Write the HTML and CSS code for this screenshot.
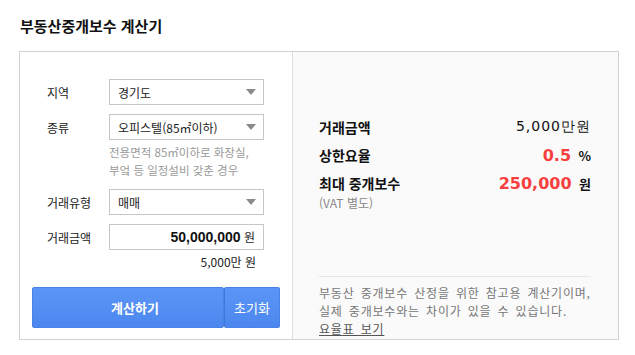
FILE: index.html
```html
<!DOCTYPE html>
<html lang="ko">
<head>
    <meta charset="UTF-8">
    <meta name="viewport" content="width=device-width, initial-scale=1.0">
    <title>부동산중개보수 계산기</title>
    <link rel="stylesheet" href="styles.css">
</head>
<body>
    <div class="page">
        <!-- Title -->
        <h2 class="title">부동산중개보수 계산기</h2>

        <div class="calc-box">
            <!-- Input form -->
            <div class="calc-form">
                <div class="field">
                    <span class="label">지역</span>
                    <div class="select">
                        <span>경기도</span>
                        <svg class="arrow" width="10" height="6" viewBox="0 0 10 6"><path d="M0 0H10L5 6Z" fill="#8a8a8a"/></svg>
                    </div>
                </div>
                <div class="field">
                    <span class="label">종류</span>
                    <div class="select">
                        <span>오피스텔(85㎡이하)</span>
                        <svg class="arrow" width="10" height="6" viewBox="0 0 10 6"><path d="M0 0H10L5 6Z" fill="#8a8a8a"/></svg>
                    </div>
                </div>
                <p class="hint">전용면적 85㎡이하로 화장실,<br>부엌 등 일정설비 갖춘 경우</p>
                <div class="field">
                    <span class="label">거래유형</span>
                    <div class="select">
                        <span>매매</span>
                        <svg class="arrow" width="10" height="6" viewBox="0 0 10 6"><path d="M0 0H10L5 6Z" fill="#8a8a8a"/></svg>
                    </div>
                </div>
                <div class="field field-amount">
                    <span class="label">거래금액</span>
                    <div class="amount-input">
                        <span class="amount-num">50,000,000</span> 원
                    </div>
                </div>
                <p class="amount-note">5,000만 원</p>

                <div class="btn-row">
                    <button class="btn btn-calc">계산하기</button>
                    <button class="btn btn-reset">초기화</button>
                </div>
            </div>

            <!-- Result -->
            <div class="calc-result">
                <div class="result-list">
                    <div class="result-row">
                        <span class="result-label">거래금액</span>
                        <span class="result-value">5,000만원</span>
                    </div>
                    <div class="result-row">
                        <span class="result-label">상한요율</span>
                        <span class="result-value"><em class="red">0.5</em> <b class="unit">%</b></span>
                    </div>
                    <div class="result-row">
                        <span class="result-label">최대 중개보수</span>
                        <span class="result-value"><em class="red">250,000</em> <b class="unit">원</b></span>
                    </div>
                    <p class="vat">(VAT 별도)</p>
                </div>

                <div class="notice">
                    <p>부동산 중개보수 산정을 위한 참고용 계산기이며,<br>실제 중개보수와는 차이가 있을 수 있습니다.</p>
                    <a href="#" class="rate-link">요율표 보기</a>
                </div>
            </div>
        </div>
    </div>
</body>
</html>
```

FILE: styles.css
```css
/* General */
body {
    margin: 0;
    font-family: 'Noto Sans CJK KR', 'Noto Sans', sans-serif;
    font-size: 12px;
    color: #333;
    background-color: #fff;
}

.page {
    padding: 16px 0 0 19px;
}

.title {
    margin: 0 0 15px 1px;
    font-size: 15px;
    font-weight: bold;
    line-height: 20px;
    color: #111;
}

/* Box */
.calc-box {
    display: flex;
    width: 600px;
    border: 1px solid #d2d2d2;
    box-sizing: border-box;
}

/* Left form */
.calc-form {
    width: 273px;
    padding: 27px 12px 11px;
    border-right: 1px solid #dedede;
    box-sizing: border-box;
}

.field {
    display: flex;
    align-items: center;
    padding: 0 16px 0 15px;
}

.field + .field {
    margin-top: 9px;
}

.label {
    width: 62px;
    font-size: 12px;
    color: #222;
}

.select {
    display: flex;
    align-items: center;
    justify-content: space-between;
    width: 155px;
    height: 26px;
    padding: 0 7px 0 8px;
    border: 1px solid #c6c6c6;
    box-sizing: border-box;
    font-size: 12px;
    color: #222;
}

.hint {
    margin: 3px 0 10px 77px;
    font-size: 11.5px;
    line-height: 18px;
    color: #999;
}

.amount-input {
    width: 155px;
    height: 26px;
    padding: 0 8px;
    border: 1px solid #c6c6c6;
    box-sizing: border-box;
    text-align: right;
    line-height: 24px;
    font-size: 12px;
    color: #222;
}

.amount-num {
    font-family: 'Liberation Sans', Arial, sans-serif;
    font-size: 14px;
    font-weight: bold;
    color: #111;
}

.amount-note {
    margin: 4px 0 0;
    padding-right: 24px;
    text-align: right;
    line-height: 16px;
    font-size: 12px;
    color: #222;
}

/* Buttons */
.btn-row {
    display: flex;
    margin-top: 17px;
}

.btn {
    height: 41px;
    border: 1px solid #4a83e6;
    border-radius: 2px;
    background: linear-gradient(#5b95f6, #4b87ef);
    color: #fff;
    font-family: 'Noto Sans CJK KR', sans-serif;
    font-size: 13px;
    cursor: pointer;
}

.btn-calc {
    width: 192px;
    padding-left: 20px;
    font-weight: bold;
}

.btn-reset {
    width: 56px;
    border-left-color: #3f78da;
}

/* Right result */
.calc-result {
    flex: 1;
    display: flex;
    flex-direction: column;
    padding: 61px 27px 1px 26px;
    background-color: #fafafa;
}

.result-row {
    display: flex;
    justify-content: space-between;
    align-items: center;
    height: 28px;
}

.result-label {
    font-size: 14px;
    font-weight: bold;
    color: #111;
}

.result-value {
    font-family: 'DejaVu Sans', sans-serif;
    font-size: 14px;
    letter-spacing: 1px;
    color: #111;
}

.result-value .red {
    font-style: normal;
    font-weight: bold;
    font-size: 16px;
    letter-spacing: 0;
    color: #f83f3f;
}

.result-value .unit {
    font-family: 'Noto Sans CJK KR', sans-serif;
    font-size: 13px;
    font-weight: bold;
    letter-spacing: 0;
    margin-left: 2px;
}

.vat {
    margin: 0;
    line-height: 12px;
    font-size: 12px;
    color: #888;
}

.notice {
    margin-top: auto;
    padding-top: 7px;
    border-top: 1px solid #e6e6e6;
    font-size: 12px;
    line-height: 18px;
    letter-spacing: 0.8px;
    word-spacing: 2px;
    color: #777;
}

.notice p {
    margin: 0;
}

.rate-link {
    color: #555;
    text-decoration: underline;
}
```
